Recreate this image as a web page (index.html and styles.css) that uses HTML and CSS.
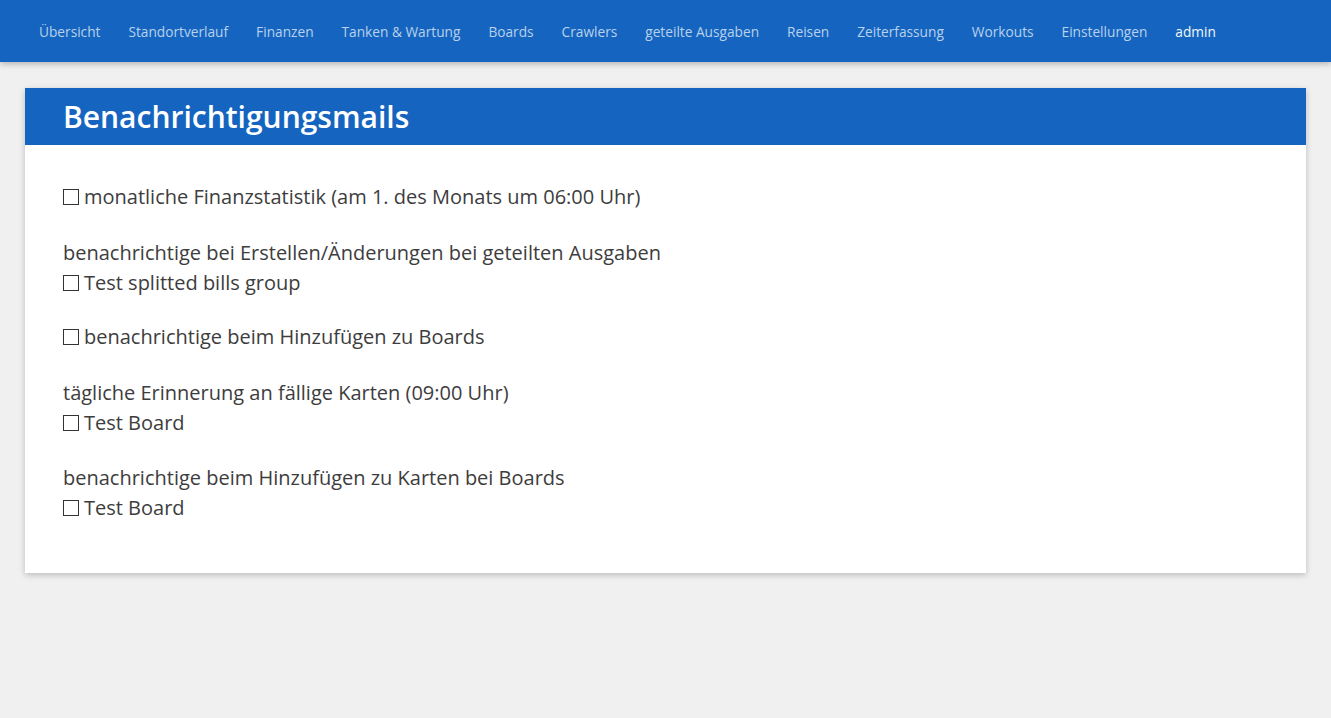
FILE: index.html
```html
<!DOCTYPE html>
<html lang="de">
<head>
<meta charset="utf-8">
<title>Benachrichtigungsmails</title>
<link rel="stylesheet" href="styles.css">
</head>
<body>
<nav class="topnav">
  <a class="nav-link" href="#">Übersicht</a>
  <a class="nav-link" href="#">Standortverlauf</a>
  <a class="nav-link" href="#">Finanzen</a>
  <a class="nav-link" href="#">Tanken &amp; Wartung</a>
  <a class="nav-link" href="#">Boards</a>
  <a class="nav-link" href="#">Crawlers</a>
  <a class="nav-link" href="#">geteilte Ausgaben</a>
  <a class="nav-link" href="#">Reisen</a>
  <a class="nav-link" href="#">Zeiterfassung</a>
  <a class="nav-link" href="#">Workouts</a>
  <a class="nav-link" href="#">Einstellungen</a>
  <a class="nav-link nav-user" href="#">admin</a>
</nav>
<main class="page">
  <section class="card">
    <header class="card-header">
      <h1 class="card-title">Benachrichtigungsmails</h1>
    </header>
    <div class="card-body">
      <div class="group">
        <label class="check"><span class="box"></span>monatliche Finanzstatistik (am 1. des Monats um 06:00 Uhr)</label>
      </div>
      <div class="group">
        <div class="line">benachrichtige bei Erstellen/Änderungen bei geteilten Ausgaben</div>
        <label class="check"><span class="box"></span>Test splitted bills group</label>
      </div>
      <div class="group">
        <label class="check"><span class="box"></span>benachrichtige beim Hinzufügen zu Boards</label>
      </div>
      <div class="group">
        <div class="line">tägliche Erinnerung an fällige Karten (09:00 Uhr)</div>
        <label class="check"><span class="box"></span>Test Board</label>
      </div>
      <div class="group">
        <div class="line">benachrichtige beim Hinzufügen zu Karten bei Boards</div>
        <label class="check"><span class="box"></span>Test Board</label>
      </div>
    </div>
  </section>
</main>
</body>
</html>
```
FILE: styles.css
```css
* { box-sizing: border-box; }
html, body {
  margin: 0;
  padding: 0;
}
body {
  background: #f0f0f0;
  font-family: "Open Sans", "Noto Sans", sans-serif;
  color: #3d3d3d;
}
.topnav {
  height: 62px;
  background: #1565c0;
  display: flex;
  align-items: center;
  padding: 2px 25px 0;
  box-shadow: 0 2px 6px rgba(0, 0, 0, 0.25);
}
.nav-link {
  font-size: 13.7px;
  color: #b9d1ec;
  text-decoration: none;
  padding: 0 14px;
  line-height: 20px;
}
.nav-user {
  color: #f4f8fc;
  font-weight: 500;
}
.page {
  padding: 26px 25px;
}
.card {
  background: #fff;
  box-shadow: 0 2px 6px rgba(0, 0, 0, 0.22);
}
.card-header {
  background: #1565c0;
  height: 57px;
  display: flex;
  align-items: center;
  padding: 0 38px;
}
.card-title {
  margin: 0;
  color: #fff;
  font-size: 30px;
  font-weight: 600;
  line-height: 1;
}
.card-body {
  padding: 37px 38px 26px;
  font-size: 20px;
  line-height: 30px;
}
.group {
  margin-bottom: 25px;
}
.line {
  padding-top: 1px;
}
.line + .check {
  margin-bottom: -1px;
}
.check {
  display: flex;
  align-items: center;
}
.box {
  width: 16px;
  height: 16px;
  border: 1px solid #333;
  margin-right: 5px;
  flex: none;
}
```
